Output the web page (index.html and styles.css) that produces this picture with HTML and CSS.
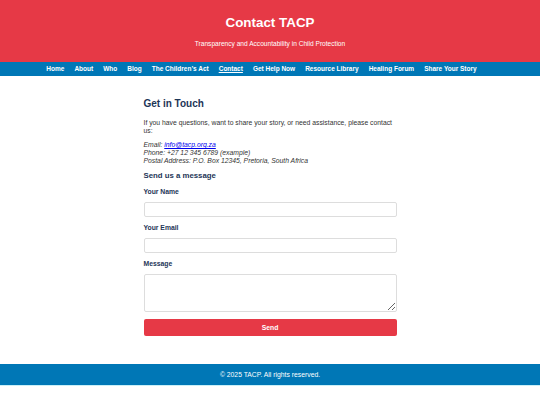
FILE: index.html
```html
<!DOCTYPE html>
<html lang="en">
<head>
<meta charset="utf-8">
<title>Contact TACP</title>
<link rel="stylesheet" href="styles.css">
</head>
<body>
<header class="site-header">
  <h1 class="site-title">Contact TACP</h1>
  <p class="site-tagline">Transparency and Accountability in Child Protection</p>
</header>
<nav class="site-nav">
  <ul class="nav-list">
    <li><a href="#">Home</a></li>
    <li><a href="#">About</a></li>
    <li><a href="#">Who</a></li>
    <li><a href="#">Blog</a></li>
    <li><a href="#">The Children’s Act</a></li>
    <li><a href="#" class="active">Contact</a></li>
    <li><a href="#">Get Help Now</a></li>
    <li><a href="#">Resource Library</a></li>
    <li><a href="#">Healing Forum</a></li>
    <li><a href="#">Share Your Story</a></li>
  </ul>
</nav>
<main class="content">
  <h2 class="section-title">Get in Touch</h2>
  <p class="intro">If you have questions, want to share your story, or need assistance, please contact us:</p>
  <p class="contact-details">Email: <a href="#">info@tacp.org.za</a><br>Phone: +27 12 345 6789 (example)<br>Postal Address: P.O. Box 12345, Pretoria, South Africa</p>
  <h3 class="form-title">Send us a message</h3>
  <form class="contact-form">
    <label class="field-label" for="name">Your Name</label>
    <input class="field-input" id="name" type="text">
    <label class="field-label" for="email">Your Email</label>
    <input class="field-input" id="email" type="email">
    <label class="field-label" for="msg">Message</label>
    <textarea class="field-area" id="msg"></textarea>
    <button class="send-btn" type="button">Send</button>
  </form>
</main>
<footer class="site-footer">
  <p>© 2025 TACP. All rights reserved.</p>
</footer>
</body>
</html>
```
FILE: styles.css
```css
* { box-sizing: border-box; }
html, body { margin: 0; padding: 0; }
body {
  font-family: "Liberation Sans", Arial, sans-serif;
  font-size: 6.8px;
  color: #333;
  background: #fff;
}
.site-header {
  background: #e63946;
  color: #fff;
  text-align: center;
  padding: 15px 10px 0;
  height: 62px;
}
.site-title {
  margin: 0;
  font-size: 13.4px;
  line-height: 16px;
  font-weight: bold;
}
.site-tagline {
  margin: 9px 0 0;
  font-size: 6.6px;
  line-height: 8px;
}
.site-nav {
  background: #0077b6;
  height: 14px;
}
.nav-list {
  list-style: none;
  margin: 0;
  padding: 0 17px 0 0;
  display: flex;
  justify-content: center;
  gap: 10px;
  height: 14px;
  align-items: center;
}
.nav-list a {
  color: #fff;
  text-decoration: none;
  font-weight: bold;
  font-size: 6.5px;
  line-height: 8px;
  display: block;
}
.nav-list a.active { text-decoration: underline; }
.content {
  width: 253px;
  margin: 0 auto;
  padding: 22px 0 28px;
}
.section-title {
  margin: 0 0 9px;
  font-size: 10px;
  line-height: 12px;
  color: #1d3557;
}
.intro, .contact-details {
  margin: 0 0 6px;
  line-height: 8px;
}
.contact-details { font-style: italic; margin-bottom: 6px; }
.contact-details a { color: #0000ee; }
.form-title {
  margin: 0 0 7px;
  font-size: 7.8px;
  line-height: 10px;
  color: #1d3557;
}
.contact-form { display: flex; flex-direction: column; }
.field-label {
  font-weight: bold;
  color: #1d3557;
  line-height: 8px;
  margin: 0 0 6px;
}
.field-input, .field-area {
  width: 100%;
  border: 1px solid #ddd;
  border-radius: 2px;
  padding: 3px;
  font: inherit;
  margin: 0 0 7px;
}
.field-input { height: 15px; }
.field-area { height: 38px; }
.send-btn {
  height: 17px;
  background: #e63946;
  color: #fff;
  border: none;
  border-radius: 2px;
  font: bold 6.8px "Liberation Sans", Arial, sans-serif;
}
.site-footer {
  background: #0077b6;
  color: #fff;
  text-align: center;
  height: 22px;
  border-bottom: 1px solid #caf0f8;
  display: flex;
  align-items: center;
  justify-content: center;
}
.site-footer p { margin: 0; font-size: 6.8px; }
```
